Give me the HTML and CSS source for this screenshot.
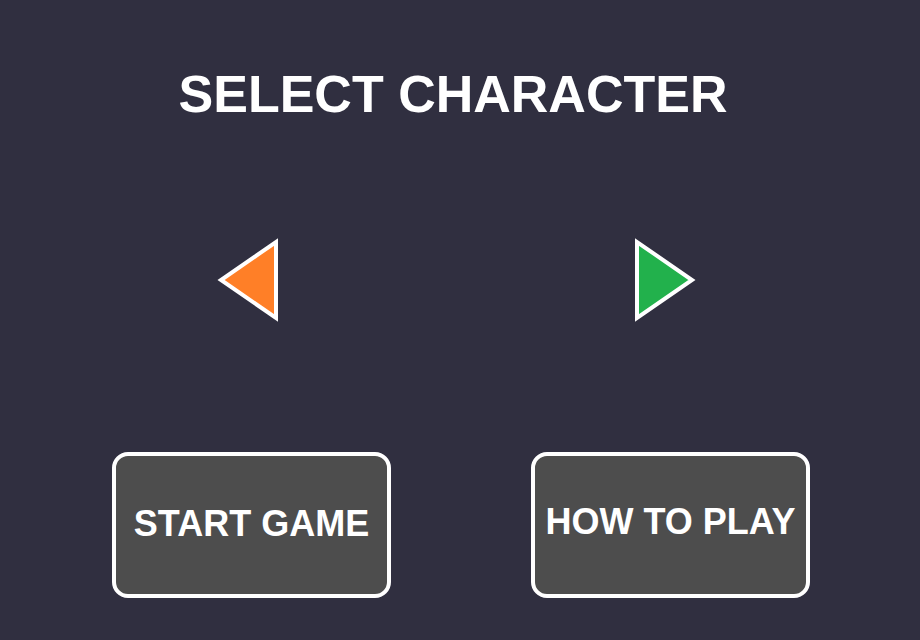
FILE: index.html
```html
<!DOCTYPE html>
<html>
<head>
<meta charset="utf-8">
<link rel="stylesheet" href="styles.css">
</head>
<body>
<div class="screen">
  <h1 class="title">SELECT CHARACTER</h1>
  <div class="arrows">
    <svg class="arrow" width="64" height="84" viewBox="0 0 64 84">
      <polygon points="60,4 60,80 5,42" fill="#ff7f27" stroke="#ffffff" stroke-width="4"/>
    </svg>
    <svg class="arrow" width="64" height="84" viewBox="0 0 64 84">
      <polygon points="5,4 5,80 60,42" fill="#22b14c" stroke="#ffffff" stroke-width="4"/>
    </svg>
  </div>
  <div class="buttons">
    <div class="btn btn-start">START GAME</div>
    <div class="btn">HOW TO PLAY</div>
  </div>
</div>
</body>
</html>
```
FILE: styles.css
```css
html, body {
  margin: 0;
  padding: 0;
  background: #302f40;
}
.screen {
  width: 920px;
  height: 640px;
  display: flex;
  flex-direction: column;
  align-items: center;
  font-family: "Liberation Sans", Arial, sans-serif;
  color: #ffffff;
}
.title {
  margin: 0;
  padding-top: 64px;
  padding-right: 14px;
  font-size: 52px;
  line-height: 60px;
  font-weight: bold;
}
.arrows {
  margin-top: 114px;
  display: flex;
  gap: 352px;
  padding-right: 8px;
}
.arrow {
  display: block;
}
.buttons {
  margin-top: 130px;
  display: flex;
  gap: 140px;
  padding-left: 2px;
}
.btn {
  box-sizing: border-box;
  width: 279px;
  height: 146px;
  border: 4px solid #ffffff;
  border-radius: 16px;
  background: #4d4d4d;
  display: flex;
  align-items: center;
  justify-content: center;
  padding-bottom: 6px;
  font-size: 36px;
  font-weight: bold;
}
.btn-start {
  padding-bottom: 2px;
}
```
